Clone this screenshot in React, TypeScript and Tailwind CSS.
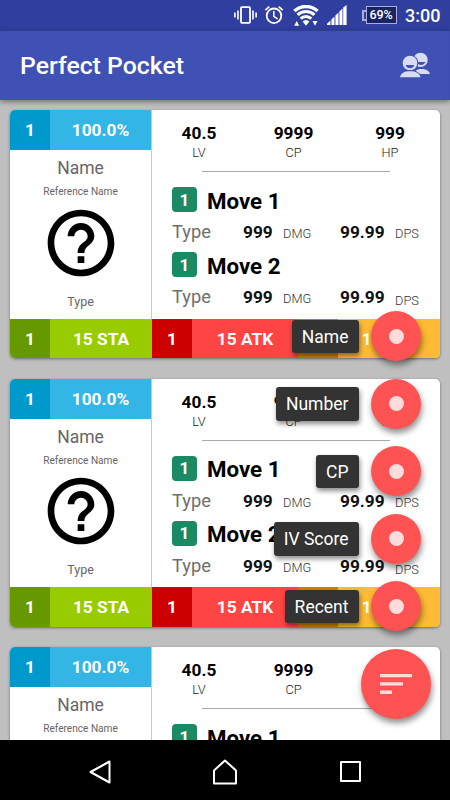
import clsx from "clsx";

interface Sort {
  label: string;
}

const sorts: Sort[] = [
  { label: "Name" },
  { label: "Number" },
  { label: "CP" },
  { label: "IV Score" },
  { label: "Recent" },
];

const stats = [
  { value: "40.5", label: "LV" },
  { value: "9999", label: "CP" },
  { value: "999", label: "HP" },
];

const moves = ["Move 1", "Move 2"];

function StatusBar() {
  return (
    <div className="flex h-[30px] shrink-0 items-center bg-[#303f9f] pl-[234px] text-white">
      {/* vibrate */}
      <svg width="23" height="18" viewBox="0 0 23 18" className="shrink-0" fill="none" stroke="#fff">
        <rect x="7" y="1.2" width="9" height="15.6" rx="0.8" strokeWidth="1.8" />
        <path d="M4 4.5v9M19 4.5v9" strokeWidth="1.6" />
        <path d="M.9 6.5v5M22.1 6.5v5" strokeWidth="1.6" />
      </svg>
      {/* alarm */}
      <svg width="20" height="20" viewBox="0 0 20 20" className="ml-[7px] shrink-0" fill="none" stroke="#fff">
        <circle cx="10" cy="10.8" r="7.3" strokeWidth="1.8" />
        <path d="M9.8 6v5.4l3.8 2.4" strokeWidth="1.5" />
        <path d="M1.3 5.2l4-3.6M18.7 5.2l-4-3.6" strokeWidth="1.8" />
      </svg>
      {/* wifi */}
      <svg width="26" height="21" viewBox="0 0 26 21" className="ml-[9px] shrink-0" fill="none" stroke="#fff">
        <path d="M1.4 6a17 17 0 0 1 23.2 0" strokeWidth="3.4" />
        <path d="M4.6 9.9a12.2 12.2 0 0 1 16.8 0" strokeWidth="3" />
        <path d="M7.7 13.6a7.7 7.7 0 0 1 10.6 0" strokeWidth="3" />
        <path d="M9.6 16.6a5 5 0 0 1 6.8 0L13 20.8z" fill="#fff" stroke="none" />
        <path d="M1.2 20.8h5L3.7 16zM19.5 16h5L22 20.8z" fill="#fff" stroke="none" />
      </svg>
      {/* signal */}
      <svg width="20" height="20" viewBox="0 0 20 20" className="ml-2 shrink-0" fill="#fff">
        <path d="M0 20v-1.2l3.4-3.4V20zM4.4 20v-5.6l3.1-2.9V20zM8.4 20v-9.6l3.1-2.9V20zM12.4 20V6.4l3.1-2.9V20zM16.2 20V2.6L19.6 0v20z" />
      </svg>
      {/* battery */}
      <div className="ml-[14.5px] flex h-[18px] shrink-0 items-center">
        <div className="h-[11px] w-[4px] border-2 border-r-0 border-[#a9afd6]" />
        <div className="flex h-[18px] w-[31px] items-center justify-center border-[1.5px] border-[#a9afd6] bg-[#1b2360] text-[12.5px] leading-none font-medium tracking-[-0.2px]">
          69%
        </div>
      </div>
      <span className="ml-[8.5px] pt-px text-[18px] leading-none font-medium">3:00</span>
    </div>
  );
}

function PeopleIcon() {
  return (
    <svg width="31" height="26" viewBox="0 0 31 26">
      <circle cx="20.5" cy="7.9" r="7.2" fill="#d9dcf0" />
      <path d="M16.5 10h9q-1.5 3-4.5 3t-4.500-3z" fill="#3f51b5" />
      <path d="M14 22c1-3.500 3-5 7.500-5s7.500 1.800 8.500 5z" fill="#d9dcf0" />
      <circle cx="10" cy="11" r="8.3" fill="#3f51b5" />
      <circle cx="10" cy="11" r="7.3" fill="#d9dcf0" />
      <path d="M5.6 13h8.800q-1.200 3.200-4.400 3.200T5.600 13z" fill="#3f51b5" />
      <path d="M-1 26c1-5 4.500-7.700 11-7.700s10.500 2.700 11.500 7.700z" fill="#3f51b5" />
      <path d="M0 25.200c1-4.200 4-6 10-6s9.500 1.800 10.500 6z" fill="#d9dcf0" />
    </svg>
  );
}

function AppBar() {
  return (
    <header className="z-10 flex h-[70px] shrink-0 items-center justify-between bg-[#3f51b5] pr-[19px] pl-5 shadow-[0_2px_5px_rgba(0,0,0,0.4),inset_0_1px_1px_rgba(0,0,0,0.25)]">
      <h1 className="pt-[3px] text-[24.8px] leading-none font-medium text-white">Perfect Pocket</h1>
      <PeopleIcon />
    </header>
  );
}

function Score({
  text,
  width,
  dark,
  light,
}: {
  text: string;
  width: string;
  dark: string;
  light: string;
}) {
  return (
    <div className={clsx("flex h-full text-[17.3px] leading-none font-bold text-white", width)}>
      <div className={clsx("flex w-10 items-center justify-center pt-[2px]", dark)}>1</div>
      <div className={clsx("flex flex-1 items-center justify-center pt-[2px]", light)}>{text}</div>
    </div>
  );
}

function Move({ name, last }: { name: string; last: boolean }) {
  return (
    <div className="h-[65px] pl-5">
      <div className="flex h-[25px] items-center">
        <div className="flex size-[25px] items-center justify-center rounded-[4px] bg-[#1a8a65] pt-px text-[17px] leading-none font-bold text-white">
          1
        </div>
        <div className="ml-[10px] pt-[3px] text-[22.3px] leading-none font-bold text-black">{name}</div>
      </div>
      <div className="mt-[10px] grid h-5 grid-cols-[71px_40px_57px_55px_1fr] items-baseline leading-5 text-[#6e6e6e]">
        <span className="text-[18.3px]">Type</span>
        <span className="text-[17.3px] font-bold text-[#111]">999</span>
        <span className="text-[12.8px] font-light text-[#333]">DMG</span>
        <span className="text-[17.3px] font-bold text-[#111]">99.99</span>
        <span className={clsx("text-[12.8px] font-light text-[#333]", last && "relative top-[2px]")}>DPS</span>
      </div>
    </div>
  );
}

function PocketCard() {
  return (
    <article className="h-[248px] shrink-0 overflow-hidden rounded-[5px] bg-white shadow-[0_1px_3px_rgba(0,0,0,0.45)]">
      <div className="flex h-[208.5px]">
        <div className="flex w-[142px] flex-col items-center border-r border-[#c8c8c8] text-[#666]">
          <div className="h-10 w-full shrink-0">
            <Score text="100.0%" width="w-full" dark="bg-[#0099cc]" light="bg-[#33b5e5]" />
          </div>
          <div className="text-[17.5px] leading-9">Name</div>
          <div className="pt-px text-[10.1px] leading-[10px]">Reference Name</div>
          <svg width="80" height="80" viewBox="0 0 24 24" className="mt-[5.5px] shrink-0">
            <path d="M11 18h2v-2h-2v2zm1-16C6.480 2 2 6.480 2 12s4.480 10 10 10 10-4.480 10-10S17.520 2 12 2zm0 18c-4.410 0-8-3.590-8-8s3.590-8 8-8 8 3.590 8 8-3.590 8-8 8zm0-14c-2.210 0-4 1.790-4 4h2c0-1.100.9-2 2-2s2 .9 2 2c0 2-3 1.750-3 5h2c0-2.250 3-2.500 3-5 0-2.210-1.790-4-4-4z" />
          </svg>
          <div className="mt-px text-[12.5px] leading-[35px]">Type</div>
        </div>
        <div className="flex-1 pt-[13px]">
          <div className="grid grid-cols-[94px_95px_98px] text-center leading-5">
            {stats.map((s) => (
              <div key={s.label}>
                <div className="text-[17.3px] leading-5 font-bold text-black">{s.value}</div>
                <div className="text-[12.8px] leading-5 font-light text-[#222]">{s.label}</div>
              </div>
            ))}
          </div>
          <div className="mt-2 mb-[15px] ml-[50px] h-px w-[188px] bg-[#aaa]" />
          {moves.map((m, i) => (
            <Move key={m} name={m} last={i === 1} />
          ))}
        </div>
      </div>
      <div className="flex h-[39.5px]">
        <Score text="15 STA" width="w-[142px]" dark="bg-[#669900]" light="bg-[#99cc00]" />
        <Score text="15 ATK" width="w-[146px]" dark="bg-[#cc0000]" light="bg-[#ff4444]" />
        <Score text="15 DEF" width="w-[142px]" dark="bg-[#d97c00]" light="bg-[#ffbb33]" />
      </div>
    </article>
  );
}

function SortMenu() {
  return (
    <div className="absolute top-[311.3px] right-[19px] z-20 flex flex-col items-end">
      {sorts.map((s) => (
        <div key={s.label} className="mr-[10px] mb-[17.5px] flex h-[50px] items-center">
          <div className="mr-[12.5px] flex h-[33.5px] items-center rounded-[3px] bg-[#333] px-[10px] pt-[2px] text-[17.5px] leading-none text-white shadow-[1px_3px_5px_rgba(0,0,0,0.45)]">
            {s.label}
          </div>
          <div className="flex size-[50px] items-center justify-center rounded-full bg-[#ff5252] shadow-[1px_4px_6px_rgba(0,0,0,0.45)]">
            <div className="size-[15px] rounded-full bg-[#ffdcdc]" />
          </div>
        </div>
      ))}
      <div className="flex size-[70px] items-center justify-center rounded-full bg-[#ff5252] shadow-[1px_4px_6px_rgba(0,0,0,0.45)]">
        <svg width="32" height="20" viewBox="0 0 32 20" fill="#ffdcdc" className="ml-[-1px]">
          <path d="M0 0h32v3.300H0zM0 8.300h23v3.300H0zM0 16.600h12v3.300H0z" />
        </svg>
      </div>
    </div>
  );
}

function NavBar() {
  return (
    <nav className="z-30 flex h-[60px] shrink-0 items-center bg-black pt-[3px] pl-[88px]">
      <svg width="24" height="26" viewBox="0 0 24 26" fill="none" stroke="#fff" strokeWidth="2">
        <path d="M21.5 2.5v21L2.5 13z" strokeLinejoin="round" />
      </svg>
      <svg width="26" height="26" viewBox="0 0 26 26" fill="none" stroke="#fff" strokeWidth="2" className="ml-[100px]">
        <path d="M2 24.5V11.5l11-10 11 10v13z" strokeLinejoin="round" />
      </svg>
      <div className="ml-[102px] size-[20.5px] rounded-[1px] border-2 border-white" />
    </nav>
  );
}

export default function App() {
  return (
    <div className="relative flex h-[800px] w-[450px] flex-col overflow-hidden bg-[#bfbfbf] font-[Roboto,sans-serif]">
      <StatusBar />
      <AppBar />
      <main className="flex min-h-0 flex-1 flex-col gap-[20.5px] overflow-hidden px-[10px] pt-[10px]">
        <PocketCard />
        <PocketCard />
        <PocketCard />
      </main>
      <SortMenu />
      <NavBar />
    </div>
  );
}
